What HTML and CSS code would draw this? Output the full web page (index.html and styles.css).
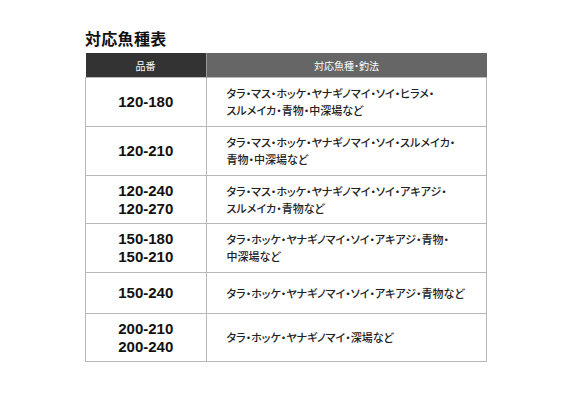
FILE: index.html
```html
<!DOCTYPE html>
<html lang="ja">
<head>
<meta charset="utf-8">
<link rel="stylesheet" href="styles.css">
</head>
<body>
<div class="page">
  <h1 class="title">対応魚種表</h1>
  <table class="fish">
    <thead>
      <tr><th class="c1">品番</th><th class="c2">対応魚種・釣法</th></tr>
    </thead>
    <tbody>
      <tr class="r1"><td class="num">120-180</td><td class="txt">タラ・マス・ホッケ・ヤナギノマイ・ソイ・ヒラメ・<br>スルメイカ・青物・中深場など</td></tr>
      <tr class="r2"><td class="num">120-210</td><td class="txt">タラ・マス・ホッケ・ヤナギノマイ・ソイ・スルメイカ・<br>青物・中深場など</td></tr>
      <tr class="r3"><td class="num">120-240<br>120-270</td><td class="txt">タラ・マス・ホッケ・ヤナギノマイ・ソイ・アキアジ・<br>スルメイカ・青物など</td></tr>
      <tr class="r4"><td class="num">150-180<br>150-210</td><td class="txt">タラ・ホッケ・ヤナギノマイ・ソイ・アキアジ・青物・<br>中深場など</td></tr>
      <tr class="r5"><td class="num">150-240</td><td class="txt">タラ・ホッケ・ヤナギノマイ・ソイ・アキアジ・青物など</td></tr>
      <tr class="r6"><td class="num">200-210<br>200-240</td><td class="txt">タラ・ホッケ・ヤナギノマイ・深場など</td></tr>
    </tbody>
  </table>
</div>
</body>
</html>
```
FILE: styles.css
```css
html, body {
  margin: 0;
  padding: 0;
  background: #fff;
}
.page {
  padding: 28px 0 0 85px;
  font-family: "Liberation Sans", "Noto Sans CJK JP", sans-serif;
  color: #111;
}
.title {
  margin: 0 0 5px 0;
  font-family: "Noto Sans CJK JP", sans-serif;
  font-size: 16px;
  line-height: 20px;
  font-weight: 700;
  letter-spacing: 0.3px;
}
.fish {
  border-collapse: collapse;
  width: 402px;
  table-layout: fixed;
}
.fish th {
  height: 24px;
  padding: 0;
  font-family: "Noto Sans CJK JP", sans-serif;
  font-feature-settings: "palt";
  font-size: 10px;
  font-weight: 400;
  color: #fff;
  text-align: center;
  vertical-align: middle;
}
.fish th.c1 {
  width: 120px;
  background: #333;
  border-right: 1px solid #999;
}
.fish th.c2 {
  background: #666;
}
.fish td {
  border: 1px solid #b8b8b8;
  padding: 0;
  vertical-align: middle;
}
.fish td.num {
  text-align: center;
  font-family: "Liberation Sans", sans-serif;
  font-weight: 700;
  font-size: 15px;
  line-height: 18px;
  color: #111;
}
.fish td.txt {
  padding-left: 20px;
  font-family: "Noto Sans CJK JP", sans-serif;
  font-feature-settings: "palt";
  font-size: 11px;
  font-weight: 500;
  line-height: 17px;
  color: #222;
  white-space: nowrap;
}
.r1 td, .r2 td, .r4 td { height: 48px; }
.r3 td, .r6 td { height: 47px; }
.r5 td { height: 40px; }
```
